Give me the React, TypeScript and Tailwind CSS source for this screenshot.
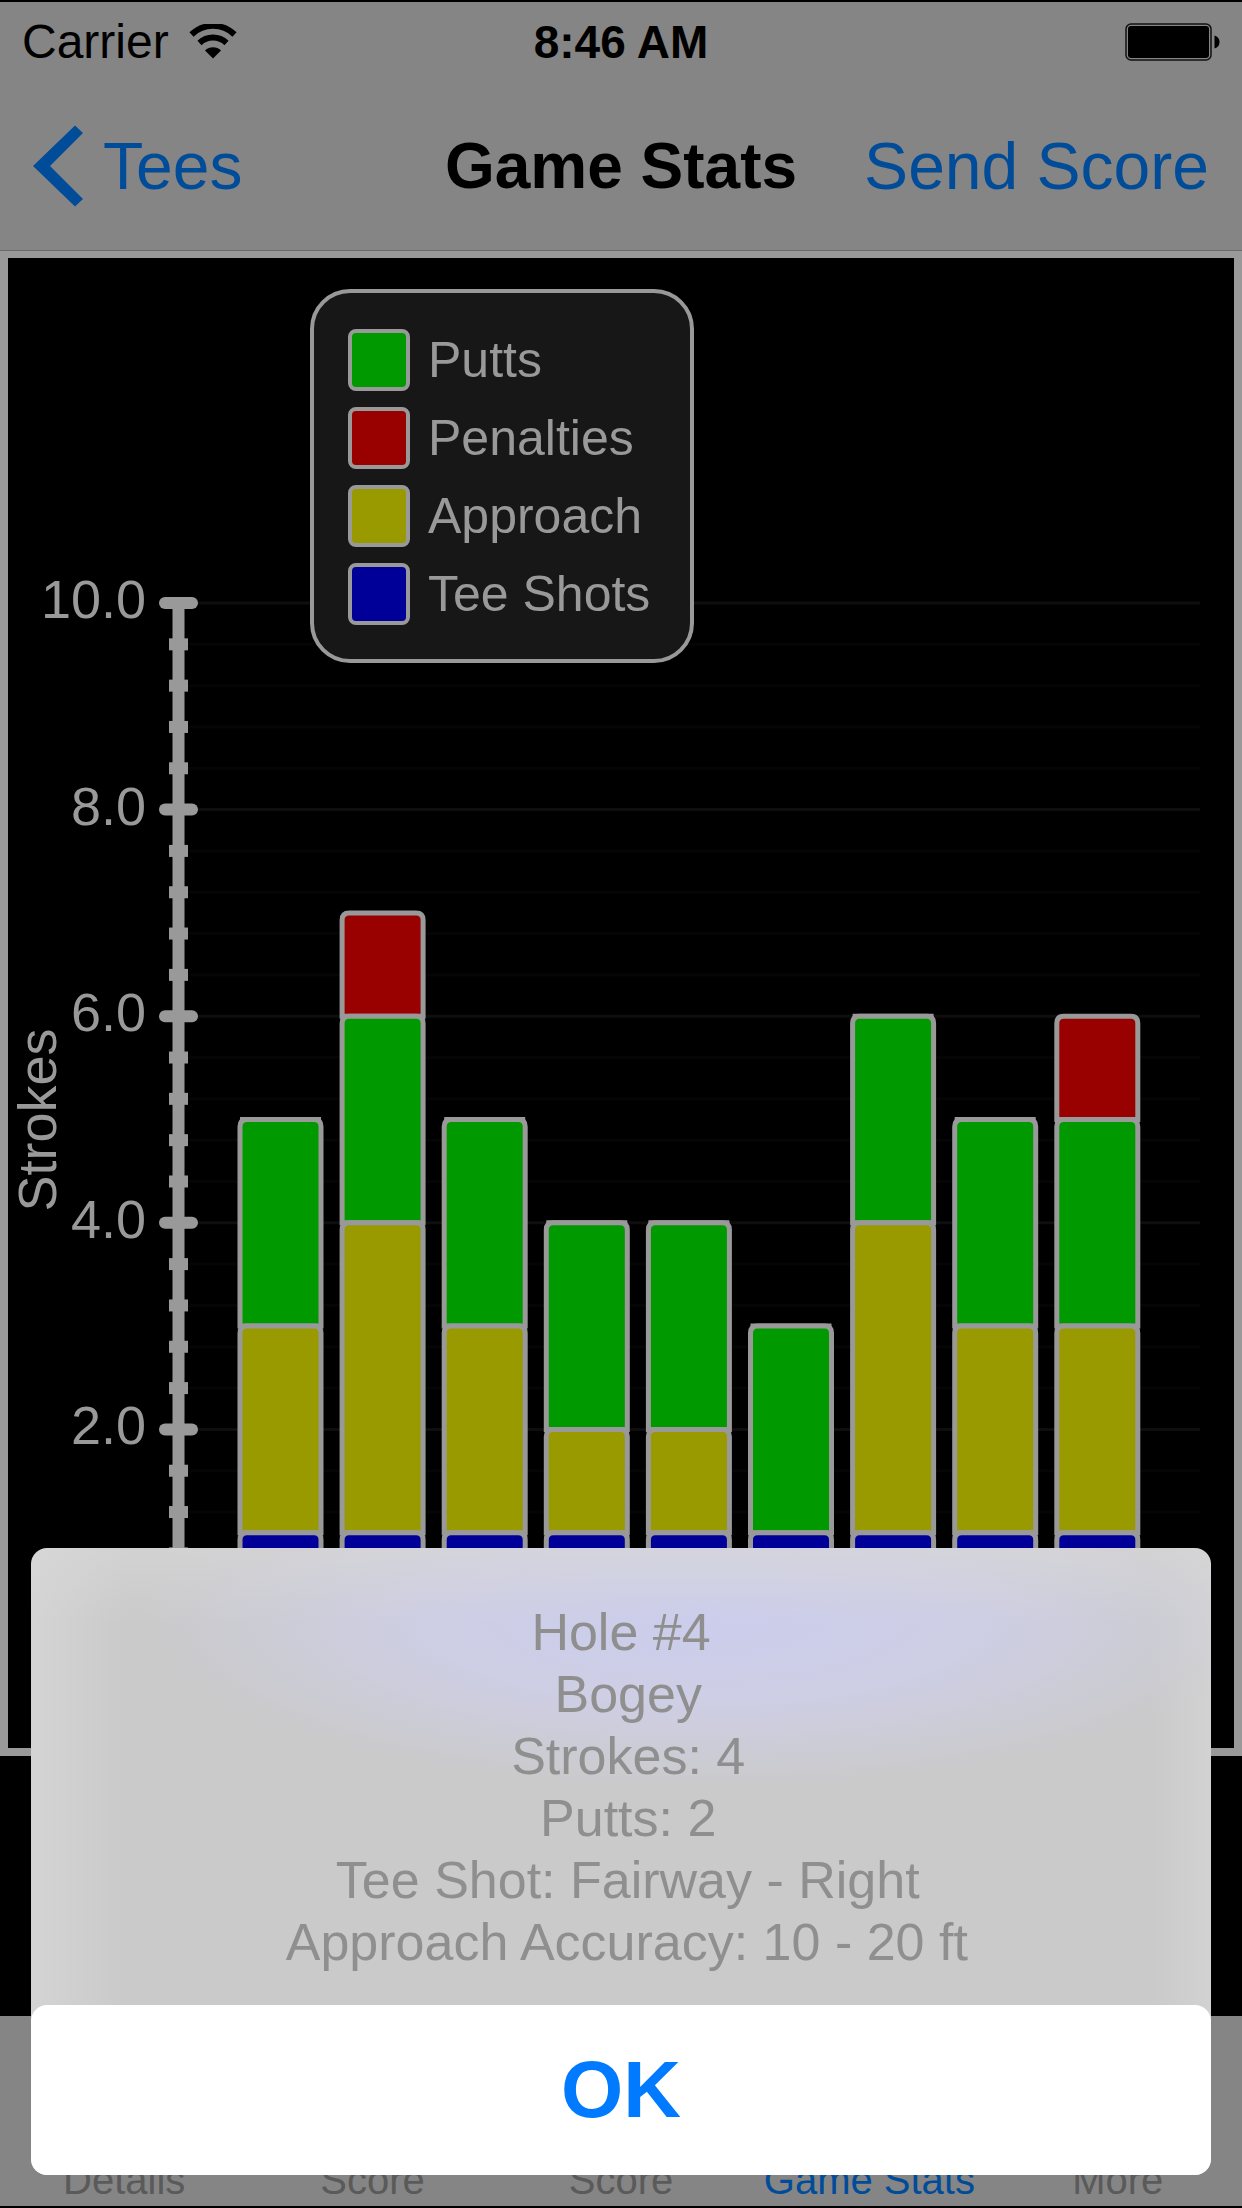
type HoleStat = { hole: number; teeShots: number; approach: number; putts: number; penalties: number };

const holes: HoleStat[] = [
  { hole: 1, teeShots: 1, approach: 2, putts: 2, penalties: 0 },
  { hole: 2, teeShots: 1, approach: 3, putts: 2, penalties: 1 },
  { hole: 3, teeShots: 1, approach: 2, putts: 2, penalties: 0 },
  { hole: 4, teeShots: 1, approach: 1, putts: 2, penalties: 0 },
  { hole: 5, teeShots: 1, approach: 1, putts: 2, penalties: 0 },
  { hole: 6, teeShots: 1, approach: 0, putts: 2, penalties: 0 },
  { hole: 7, teeShots: 1, approach: 3, putts: 2, penalties: 0 },
  { hole: 8, teeShots: 1, approach: 2, putts: 2, penalties: 0 },
  { hole: 9, teeShots: 1, approach: 2, putts: 2, penalties: 1 },
];

const legend = [
  { label: "Putts", color: "bg-[#009900]" },
  { label: "Penalties", color: "bg-[#990000]" },
  { label: "Approach", color: "bg-[#999900]" },
  { label: "Tee Shots", color: "bg-[#000099]" },
];

const tabs = ["Details", "Score", "Score", "Game Stats", "More"];

const details = [
  "Hole #4",
  " Bogey",
  " Strokes: 4",
  " Putts: 2",
  " Tee Shot: Fairway - Right",
  " Approach Accuracy: 10 - 20 ft",
];

export default function App() {
  return (
    <div className="flex min-h-screen flex-col border-y-2 border-black bg-black font-['Liberation_Sans',Arial,sans-serif]">
      <header className="border-b border-[#6a6a6a] bg-[#858585]">
        <StatusBar />
        <NavBar />
      </header>
      <main className="relative border-x-8 border-t-[7px] border-b-8 border-[#999999]">
        <StrokesChart />
        <Legend />
      </main>
      <TabBar />
      <HoleSheet />
    </div>
  );
}

function StatusBar() {
  return (
    <div className="grid h-20 grid-cols-3 items-center px-[22px]">
      <div className="flex items-center gap-5 text-[48px] leading-none">
        <span>Carrier</span>
        <WifiIcon />
      </div>
      <p className="text-center text-[46px] leading-none font-bold">8:46 AM</p>
      <BatteryIcon />
    </div>
  );
}

function WifiIcon() {
  return (
    <svg viewBox="0 0 48 36" className="h-9 w-12" aria-hidden="true">
      <path d="M2.5 10.500 A31 31 0 0 1 45.500 10.500" fill="none" stroke="#000" strokeWidth="6" />
      <path d="M10.5 19 A19.500 19.500 0 0 1 37.500 19" fill="none" stroke="#000" strokeWidth="6" />
      <path d="M24 34.500 L16 26.500 A11.500 11.500 0 0 1 32 26.500 Z" fill="#000" />
    </svg>
  );
}

function BatteryIcon() {
  return (
    <svg viewBox="0 0 95 38" className="h-[38px] w-[95px] justify-self-end" aria-hidden="true">
      <rect x="1" y="1" width="85" height="36" rx="5" fill="none" stroke="#111" strokeWidth="1.500" />
      <rect x="3" y="3" width="81" height="32" rx="3" fill="#000" />
      <path d="M89.500 12.500 Q94.500 14 94.500 19 T89.500 25.500 Z" fill="#000" />
    </svg>
  );
}

function NavBar() {
  return (
    <nav className="grid h-[168px] grid-cols-[1fr_auto_1fr] items-center px-[33px] text-[66px] leading-none text-[#004c99]">
      <a href="#tees" className="flex items-center gap-5 justify-self-start">
        <svg viewBox="0 0 50 82" className="h-[82px] w-[50px]" aria-hidden="true">
          <path d="M0 41 L42 0.500 L50 8 L17 41 L50 74 L42 81.500 Z" fill="#004c99" />
        </svg>
        Tees
      </a>
      <h1 className="text-[64px] font-bold text-black">Game Stats</h1>
      <button type="button" className="justify-self-end whitespace-nowrap">
        Send Score
      </button>
    </nav>
  );
}

const ZERO_Y = 1378;
const UNIT = 103.3;
const BAR_X = 232;
const BAR_PITCH = 102.1;
const BAR_WIDTH = 81;

const yOf = (value: number) => ZERO_Y - value * UNIT;

function StrokesChart() {
  const ticks = Array.from({ length: 26 }, (_, i) => i * 0.4);

  return (
    <svg viewBox="0 0 1226 1490" className="block h-auto w-full" role="img" aria-label="Strokes per hole">
      {ticks.map((value, i) => (
        <line
          key={i}
          x1="180"
          x2="1192"
          y1={yOf(value)}
          y2={yOf(value)}
          stroke={i % 5 === 0 ? "#0e0e0e" : "#050505"}
          strokeWidth="3"
        />
      ))}

      <line x1="170.500" x2="170.500" y1={yOf(10)} y2={yOf(0)} stroke="#999999" strokeWidth="12" />
      {ticks.map((value, i) =>
        i % 5 === 0 ? (
          <g key={i}>
            <line
              x1="157"
              x2="184"
              y1={yOf(value)}
              y2={yOf(value)}
              stroke="#999999"
              strokeWidth="12"
              strokeLinecap="round"
            />
            <text x="138" y={yOf(value) + 15} textAnchor="end" fontSize="54" fill="#999999">
              {value.toFixed(1)}
            </text>
          </g>
        ) : (
          <line
            key={i}
            x1="161"
            x2="180"
            y1={yOf(value)}
            y2={yOf(value)}
            stroke="#999999"
            strokeWidth="12"
          />
        )
      )}
      <text transform="translate(48 862) rotate(-90)" textAnchor="middle" fontSize="54" fill="#999999">
        Strokes
      </text>

      {holes.map((stat, i) => (
        <Bar key={stat.hole} stat={stat} x={BAR_X + i * BAR_PITCH} />
      ))}
    </svg>
  );
}

// Segments are painted top down so that each one's rounded cap covers the one above it.
function Bar({ stat, x }: { stat: HoleStat; x: number }) {
  const tee = stat.teeShots;
  const approach = tee + stat.approach;
  const putts = approach + stat.putts;
  const total = putts + stat.penalties;

  return (
    <g stroke="#999999" strokeWidth="5">
      {stat.penalties > 0 ? (
        <Segment x={x} from={putts} to={total} fill="#990000" />
      ) : (
        <line x1={x} x2={x + BAR_WIDTH} y1={yOf(total)} y2={yOf(total)} />
      )}
      <Segment x={x} from={approach} to={putts} fill="#009900" />
      {stat.approach > 0 && <Segment x={x} from={tee} to={approach} fill="#999900" />}
      <Segment x={x} from={0} to={tee} fill="#000099" />
    </g>
  );
}

function Segment({ x, from, to, fill }: { x: number; from: number; to: number; fill: string }) {
  const top = yOf(to);
  const bottom = yOf(from);
  const right = x + BAR_WIDTH;
  return (
    <path
      d={`M${x} ${bottom} V${top + 7} Q${x} ${top} ${x + 7} ${top} H${right - 7} Q${right} ${top} ${right} ${top + 7} V${bottom} Z`}
      fill={fill}
    />
  );
}

function Legend() {
  return (
    <ul className="absolute top-[31px] left-[302px] flex flex-col gap-4 rounded-[40px] border-4 border-[#999999] bg-[#171717] pt-9 pr-10 pb-[34px] pl-[34px]">
      {legend.map(({ label, color }) => (
        <li key={label} className="flex items-center gap-[18px] text-[50px] leading-none text-[#999999]">
          <span className={`size-[62px] rounded-lg border-4 border-[#999999] ${color}`} />
          {label}
        </li>
      ))}
    </ul>
  );
}

function TabBar() {
  return (
    <nav className="mt-auto grid h-[190px] grid-cols-5 items-end bg-[#858585] pb-1.5 text-center text-[40px] leading-none text-[#5a5a5a]">
      {tabs.map((tab, i) => (
        <a key={i} href={`#tab-${i}`} className={tab === "Game Stats" ? "text-[#004c99]" : ""}>
          {tab}
        </a>
      ))}
    </nav>
  );
}

function HoleSheet() {
  return (
    <div
      role="dialog"
      aria-label="Hole details"
      className="fixed inset-x-[31px] bottom-[33px] rounded-2xl bg-[#cacaca] bg-[linear-gradient(to_bottom,#d8d8d899,#cacaca00_12%),radial-gradient(ellipse_48%_28%_at_57%_11%,#cbcdec,#cecee4_50%,#cacaca00),linear-gradient(to_right,#d4d4d4,#cacaca00_8%,#cacaca00_95%,#d2d2d2)]"
    >
      <div className="pt-[53px] pb-8 text-center text-[52px] leading-[62px] whitespace-pre text-[#8f8f8f]">
        {details.map((line) => (
          <p key={line}>{line}</p>
        ))}
      </div>
      <button
        type="button"
        className="block h-[170px] w-full rounded-2xl bg-white text-[80px] leading-none font-bold text-[#007aff]"
      >
        OK
      </button>
    </div>
  );
}
